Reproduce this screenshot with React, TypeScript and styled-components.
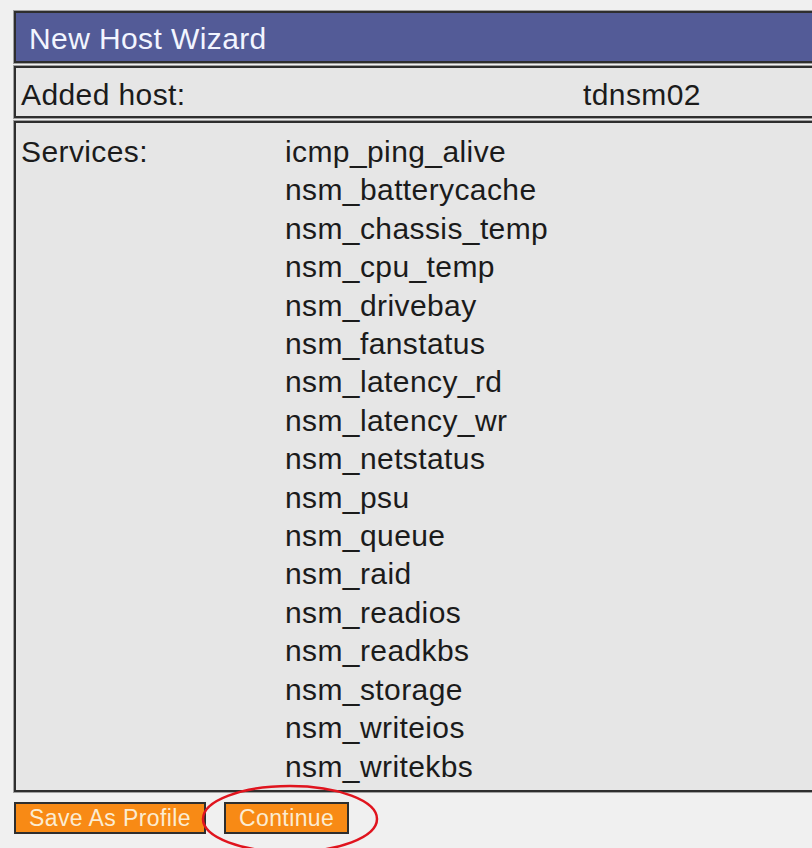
import React from "react";
import styled, { createGlobalStyle } from "styled-components";

const services = [
  "icmp_ping_alive",
  "nsm_batterycache",
  "nsm_chassis_temp",
  "nsm_cpu_temp",
  "nsm_drivebay",
  "nsm_fanstatus",
  "nsm_latency_rd",
  "nsm_latency_wr",
  "nsm_netstatus",
  "nsm_psu",
  "nsm_queue",
  "nsm_raid",
  "nsm_readios",
  "nsm_readkbs",
  "nsm_storage",
  "nsm_writeios",
  "nsm_writekbs",
];

const GlobalStyle = createGlobalStyle`
  html {
    overflow: hidden;
  }
  html, body {
    margin: 0;
    padding: 0;
    background: #f0f0f0;
  }
  body {
    min-height: 100vh;
    font-family: "Liberation Sans", Arial, sans-serif;
    color: #1b1b1b;
  }
`;

const Page = styled.div`
  width: 860px;
  padding: 11px 0 0 14px;
  display: flex;
  flex-direction: column;
  gap: 3px;
`;

const Box = styled.div`
  box-sizing: border-box;
  border: 2px solid #2e2e2e;
  box-shadow: 0 0 0 1px #a0a0a0;
  background: #e6e6e6;
`;

const Header = styled(Box)`
  height: 52px;
  background: #535b97;
  color: #f2f5ff;
  font-size: 30px;
  letter-spacing: 0.4px;
  display: flex;
  align-items: center;
  padding: 3px 0 0 13px;
`;

const Row = styled(Box)<{ $split: number }>`
  display: grid;
  grid-template-columns: ${(p) => p.$split}px 1fr;
  font-size: 30px;
  letter-spacing: 0.4px;
  padding-left: 5px;
`;

const HostRow = styled(Row)`
  height: 52px;
  align-items: center;
  padding-top: 6px;
`;

const ServicesRow = styled(Row)`
  height: 671px;
  align-items: start;
  padding-top: 10px;
  line-height: 38.4px;
`;

const List = styled.div`
  display: flex;
  flex-direction: column;
`;

const Actions = styled.div`
  position: relative;
  display: flex;
  gap: 18px;
  margin-top: 7px;
`;

const Button = styled.button`
  box-sizing: border-box;
  height: 32px;
  padding: 0 13px;
  border: 2px solid #2e2e2e;
  background: #f88a15;
  color: #fbecd2;
  font-family: "Liberation Sans", Arial, sans-serif;
  font-size: 23px;
  letter-spacing: 0.4px;
  line-height: 28px;
  cursor: pointer;
`;

// hand-drawn red ring around the Continue button
const Mark = styled.svg`
  position: absolute;
  left: 186px;
  top: -20px;
  width: 200px;
  height: 90px;
  pointer-events: none;
  overflow: visible;
`;

export default function App() {
  return (
    <>
      <GlobalStyle />
      <Page>
        <Header>New Host Wizard</Header>
        <HostRow $split={562}>
          <span>Added host:</span>
          <span>tdnsm02</span>
        </HostRow>
        <ServicesRow $split={264}>
          <span>Services:</span>
          <List>
            {services.map((s) => (
              <span key={s}>{s}</span>
            ))}
          </List>
        </ServicesRow>
        <Actions>
          <Button>Save As Profile</Button>
          <Button>Continue</Button>
          <Mark viewBox="0 0 200 90">
            <ellipse
              cx="90"
              cy="37"
              rx="87"
              ry="33"
              fill="none"
              stroke="#e0141e"
              strokeWidth="2.5"
            />
          </Mark>
        </Actions>
      </Page>
    </>
  );
}
